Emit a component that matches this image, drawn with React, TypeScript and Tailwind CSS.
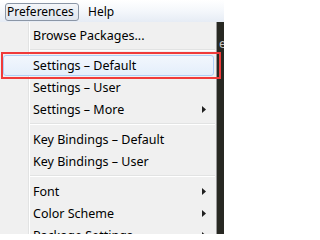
import React from 'react';

type Item = { label?: string; sub?: boolean; sep?: boolean; active?: boolean };

const items: Item[] = [
  { label: 'Browse Packages...' },
  { sep: true },
  { label: 'Settings – Default', active: true },
  { label: 'Settings – User' },
  { label: 'Settings – More', sub: true },
  { sep: true },
  { label: 'Key Bindings – Default' },
  { label: 'Key Bindings – User' },
  { sep: true },
  { label: 'Font', sub: true },
  { label: 'Color Scheme', sub: true },
  { label: 'Package Settings', sub: true },
];

const Arrow = () => (
  <svg width="4" height="7" viewBox="0 0 4 7" className="absolute left-[202px] top-[8px]">
    <path d="M0 0 L4 3.5 L0 7 Z" fill="#202020" />
  </svg>
);

export default function App() {
  return (
    <div
      className="relative w-[224px] h-[234px] overflow-hidden bg-[#272822] text-[12.5px] text-black"
      style={{ fontFamily: '"Noto Sans", "Liberation Sans", sans-serif' }}
    >
      {/* menu bar */}
      <div className="h-[22px] flex items-center bg-gradient-to-b from-white via-[#f4f7fb] to-[#e6ecf5] text-[12px]">
        <div className="ml-[5px] mt-[1px] h-[18px] w-[74px] flex items-center pl-[1px] rounded-[3px] border border-[#8b96a6] bg-gradient-to-b from-[#f4f6f9] to-[#dfe5ee]">
          Preferences
        </div>
        <div className="ml-[9px] mt-[1px]">Help</div>
      </div>

      <div className="flex h-[212px]">
        {/* menu */}
        <div className="w-[217px] border-r border-[#979797] bg-[#f0f0f0] bg-[linear-gradient(to_right,#f0f0f0_28px,#e2e3e3_28px,#e2e3e3_29px,#ffffff_29px,#ffffff_30px,#f0f0f0_30px)] pt-[2px]">
          {items.map((it, i) =>
            it.sep ? (
              <div key={i} className="h-[8px] flex flex-col justify-center pl-[30px] pr-[1px]">
                <div className="h-px bg-[#e2e3e3]" />
                <div className="h-px bg-white" />
              </div>
            ) : (
              <div key={i} className="relative h-[22px] flex items-center pl-[33px] pt-[2px]">
                {it.active && (
                  <div className="absolute left-[3px] right-[2px] top-[1px] bottom-[0px] rounded-[3px] border border-[#aecff7] bg-gradient-to-b from-[#f2f7fd] to-[#e4eefb]" />
                )}
                <span className="relative">{it.label}</span>
                {it.sub && <Arrow />}
              </div>
            )
          )}
        </div>

        {/* editor behind */}
        <div className="flex-1 bg-[#272822] pt-[13px] pl-[2px] text-[#c8c8c8] overflow-hidden">e</div>
      </div>

      {/* annotation */}
      <div className="absolute left-[1px] top-[52px] w-[220px] h-[27px] border-2 border-[#f03a3a]" />
    </div>
  );
}
